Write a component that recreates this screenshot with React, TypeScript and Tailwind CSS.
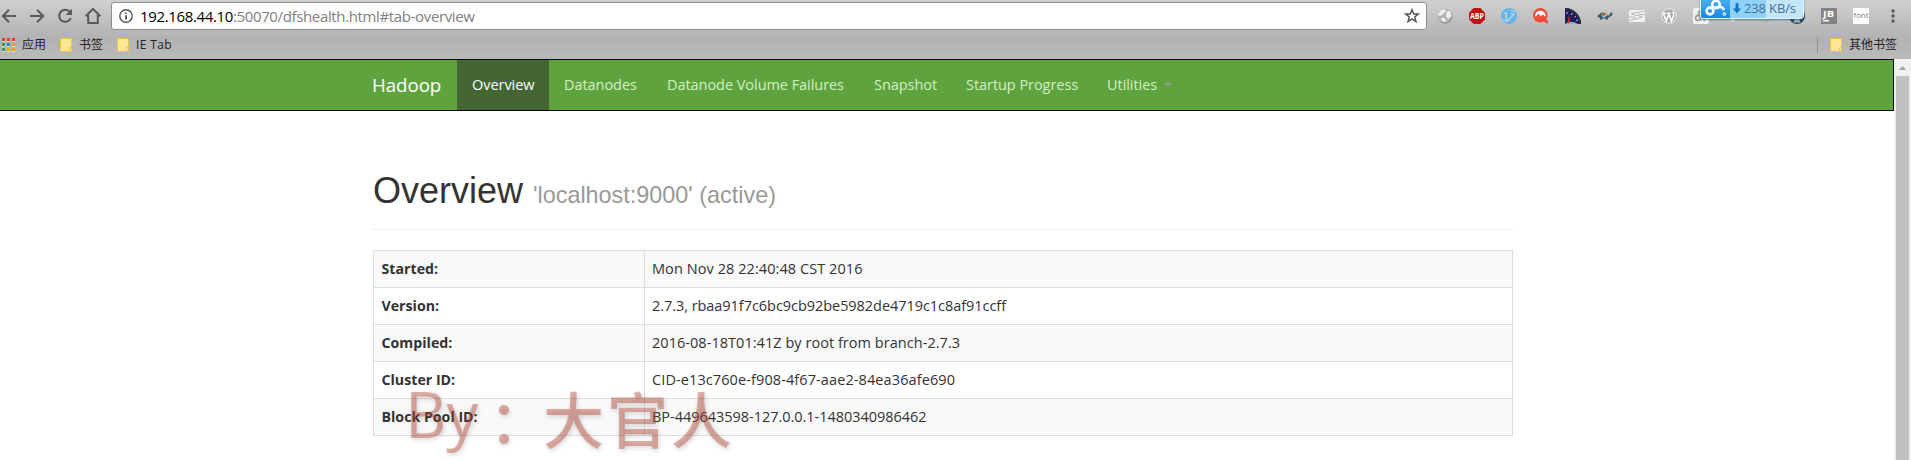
import React from "react";

function Slot({ children }: { children: React.ReactNode }) {
  return <div className="flex h-8 w-8 shrink-0 items-center justify-center">{children}</div>;
}

function Folder() {
  return (
    <svg width="12" height="14" viewBox="0 0 12 14" className="shrink-0">
      <path d="M.5.5h11v13H.5z" fill="#ffe694" stroke="#e8c44c" />
      <path d="M9.5 13V9.5h2" fill="none" stroke="#e8c44c" />
    </svg>
  );
}

function AppsGrid() {
  const colors = ["#f0392f", "#f0392f", "#f0392f", "#2da05a", "#2d87f0", "#f5a400", "#2da05a", "#f5a400", "#f5a400"];
  return (
    <svg width="13" height="14" viewBox="0 0 13 14" className="shrink-0">
      {colors.map((c, i) => (
        <g key={i}>
          <rect x={(i % 3) * 5} y={Math.floor(i / 3) * 5 + 1} width="3" height="3" fill="#ddd" />
          <rect x={(i % 3) * 5} y={Math.floor(i / 3) * 5} width="3" height="3" fill={c} />
        </g>
      ))}
    </svg>
  );
}

function NavButtons() {
  return (
    <svg width="111" height="32" viewBox="0 0 111 32" className="shrink-0" fill="none" stroke="#5a5a5a" strokeWidth="2">
      <path d="M16 16H3.5M9 9.8L2.8 16L9 22.2" />
      <path d="M30 16H42.5M37 9.8L43.2 16L37 22.2" />
      <path d="M70 12.2A6 6 0 1 0 70.8 18" />
      <path d="M72 8.7V15H65.7Z" fill="#5a5a5a" stroke="none" />
      <path d="M85.6 16.2L93 9L100.4 16.2M88.2 15V23H97.8V15" />
    </svg>
  );
}

function AddressBar() {
  return (
    <div className="flex h-7 w-[1316px] shrink-0 items-center rounded-[3px] border border-[#8c8c8c] bg-white pl-[7px] pr-[6px]">
      <svg width="14" height="14" viewBox="0 0 14 14" fill="none" stroke="#555" className="shrink-0">
        <circle cx="7" cy="7" r="6.2" strokeWidth="1.4" />
        <path d="M7 6.2V10.5M7 3.4V5.1" strokeWidth="1.8" />
      </svg>
      <div className="ml-[7px] grow whitespace-nowrap text-[15px] leading-7 tracking-[-0.36px] text-[#808080]">
        <span className="text-black">192.168.44.10</span>:50070/dfshealth.html#tab-overview
      </div>
      <svg width="16" height="16" viewBox="0 0 16 16" fill="none" stroke="#555" strokeWidth="1.5">
        <path d="M8 1.8L9.8 6H14.2L10.7 8.9L12 13.6L8 10.9L4 13.6L5.3 8.9L1.8 6H6.2Z" />
      </svg>
    </div>
  );
}

function Extensions() {
  return (
    <div className="flex h-8 grow">
      <Slot>
        <svg width="16" height="16" viewBox="0 0 16 16">
          <circle cx="8.2" cy="8.5" r="7.2" fill="#8b8b8b" />
          <circle cx="7.7" cy="7.7" r="7" fill="#b5b5b5" />
          <path d="M2 5L4 2L8 1L9 3L6 6L3 8L1 7ZM10 3L13 3L14.5 8L11 11L9 8ZM4 10L8 10L9 14L5 13Z" fill="#eee" />
        </svg>
      </Slot>
      <Slot>
        <svg width="16" height="16" viewBox="0 0 16 16">
          <path d="M4.7 0H11.3L16 4.7V11.3L11.3 16H4.7L0 11.3V4.7Z" fill="#c70d0d" />
          <text x="8" y="10.9" textAnchor="middle" textLength="14" lengthAdjust="spacingAndGlyphs" fontSize="8" fontWeight="700" fill="#fff">ABP</text>
        </svg>
      </Slot>
      <Slot>
        <svg width="16" height="16" viewBox="0 0 16 16">
          <circle cx="8" cy="8" r="8" fill="#64b5ec" />
          <path d="M2.5 4.5H6.5V10L10 6.5L9 5H14L13.5 7L6.8 14H4.3V6H2.5Z" fill="#b3d0e0" />
          <path d="M6.8 5V10.5L10.5 6.5" fill="none" stroke="#64b5ec" strokeWidth="1.2" />
          <path d="M9 2.5L14 3.5M1 11L4 13" stroke="#b9d5e5" />
        </svg>
      </Slot>
      <Slot>
        <svg width="16" height="16" viewBox="0 0 16 16">
          <path d="M11 11.5L14.8 14.6" stroke="#f04b38" strokeWidth="3" />
          <circle cx="7.3" cy="7.3" r="7.3" fill="#f04b38" />
          <path d="M2 7.5A5.4 5.4 0 0 1 12.7 7.5L11.5 8.5L9.8 6.3L7.8 8.5L5.5 5.5L2.5 9Z" fill="#fff" />
        </svg>
      </Slot>
      <Slot>
        <svg width="16" height="16" viewBox="0 0 16 16">
          <path d="M0 0C9 0 16 7 16 16H0Z" fill="#1d1c58" />
          <path d="M0 .8C8 .8 15.2 8 15.2 16" fill="none" stroke="#33303f" strokeWidth="1.6" />
          <path d="M0 16Q6 11.5 13 16Z" fill="#7fb0d9" />
          <path d="M2.5 15L4.3 6L5 15Z" fill="#e22c24" />
          <path d="M2 4V6M7 5L6.5 7M11 8L9.5 9.5M13 12L11 12.5" stroke="#ccd" />
        </svg>
      </Slot>
      <Slot>
        <svg width="16" height="16" viewBox="0 0 16 16">
          <path d="M.5 8Q6 1.5 11 7.5L12.5 7L13.3 4.5L15.8 5L15 7.5L11.5 9.5L11 11.5H9L8 10.5H5.5L4.5 11.8H3L3 10L.5 8.8Z" fill="#44576a" />
          <path d="M3.5 7.5Q4.5 5 6.7 4.8L7 7.5Z" fill="#4fae68" />
          <path d="M4.5 5.8Q7 4 9 5.5L7 7Z" fill="#e44b38" />
          <path d="M8.3 5.5Q10 6 10.2 8H8Z" fill="#f1c14b" />
          <path d="M5 7.5H9L8 9.6H6Z" fill="#8ccbf2" />
        </svg>
      </Slot>
      <Slot>
        <svg width="16" height="16" viewBox="0 0 16 16">
          <path d="M0 2H16V14H0Z" fill="#f2f2f2" />
          <path d="M16 3.3L3 5.2Q1.5 6.2 5 6.8L13 8.4Q14 9.6 0 12.2M0 8.8L7 9.3M9 6L16 6.8" fill="none" stroke="#b9b9b9" strokeWidth="1.1" />
        </svg>
      </Slot>
      <Slot>
        <svg width="16" height="16" viewBox="0 0 16 16">
          <circle cx="8" cy="8" r="7.2" fill="#aaa" stroke="#eee" strokeWidth="1" />
          <path d="M2.3 5.2L5.2 13L7.8 6L10.5 13L13 6.5M1.8 5.2H5M6 5.2H9.5M11.5 4L13 6.5" fill="none" stroke="#fff" strokeWidth="1.6" />
        </svg>
      </Slot>
      <Slot>
        <svg width="16" height="16" viewBox="0 0 16 16">
          <rect width="16" height="16" rx="2" fill="#f2f2f2" />
          <circle cx="5" cy="10" r="2.5" fill="none" stroke="#999" strokeWidth="1.6" />
          <circle cx="8" cy="5.5" r="2.5" fill="none" stroke="#999" strokeWidth="1.6" />
          <path d="M8 8L12 12.5" stroke="#999" strokeWidth="1.6" />
        </svg>
      </Slot>
      <Slot>
        <svg width="16" height="16" viewBox="0 0 16 16"><path d="M5 11H11L8 14Z" fill="#eee" /></svg>
      </Slot>
      <Slot>
        <svg width="16" height="16" viewBox="0 0 16 16"><circle cx="8" cy="9" r="5" fill="#bdbdbd" stroke="#a8a8a8" /></svg>
      </Slot>
      <Slot>
        <svg width="16" height="16" viewBox="0 0 16 16">
          <circle cx="8" cy="8" r="8" fill="#2a4a60" />
          <path d="M4.5 14.5L6 10H10L11.5 14.5Z" fill="#a9b6be" />
        </svg>
      </Slot>
      <Slot>
        <svg width="16" height="16" viewBox="0 0 16 16">
          <rect width="16" height="16" fill="#858585" />
          <text x="2" y="9" textLength="11" lengthAdjust="spacingAndGlyphs" fontSize="9.5" fontWeight="700" fill="#fff">JB</text>
          <path d="M2 12.7H8" stroke="#fff" strokeWidth="1.4" />
        </svg>
      </Slot>
      <Slot>
        <svg width="16" height="16" viewBox="0 0 16 16">
          <rect width="16" height="16" fill="#fff" />
          <text x=".5" y="10" textLength="15" lengthAdjust="spacingAndGlyphs" fontSize="7.5" fill="#777">font</text>
        </svg>
      </Slot>
      <Slot>
        <svg width="4" height="16" viewBox="0 0 4 16" fill="#5a5a5a">
          <circle cx="2" cy="3" r="1.7" /><circle cx="2" cy="8" r="1.7" /><circle cx="2" cy="13" r="1.7" />
        </svg>
      </Slot>
    </div>
  );
}

function SpeedWidget() {
  return (
    <div className="absolute left-[1700px] top-[-4px] flex h-[23px] w-[104px] overflow-hidden rounded-[3px] border border-[#eaf6fd] shadow-[0_1px_2px_rgba(0,70,130,0.6)]">
      <div className="flex w-[29px] shrink-0 items-center justify-center bg-linear-to-b from-[#4fb4f2] to-[#1688df]">
        <svg width="22" height="18" viewBox="0 0 22 18" fill="none" stroke="#fff" strokeWidth="2.6">
          <circle cx="5" cy="12" r="3.4" />
          <circle cx="11" cy="5.5" r="3.8" />
          <path d="M10 9Q17 6 19 11" />
          <circle cx="19.3" cy="15" r=".5" />
        </svg>
      </div>
      <div className="flex grow items-center bg-linear-to-r from-[#8fd1fa] from-50% to-[#c3e6fb] to-50% pl-[3px] pt-[1px] text-[13px] leading-none text-[#41729c]">
        <svg width="8" height="11" viewBox="0 0 8 11" className="mr-[3px] shrink-0">
          <path d="M2.6 0H5.4V5.5H8L4 10.5L0 5.5H2.6Z" fill="#0d73c4" />
        </svg>
        <span className="whitespace-nowrap tracking-[-0.15px]">238 KB/s</span>
      </div>
    </div>
  );
}

function BookmarksBar() {
  return (
    <div className="flex h-[25px] items-center pl-[2px] text-[12px] leading-[25px] text-[#222]">
      <AppsGrid />
      <span className="ml-[7px] w-[38px] shrink-0">应用</span>
      <Folder />
      <span className="ml-[7px] w-[38px] shrink-0">书签</span>
      <Folder />
      <span className="ml-[7px] grow tracking-[0.35px]">IE Tab</span>
      <div className="mr-3 h-4 w-px bg-[#909090]" />
      <Folder />
      <span className="ml-[7px] mr-[14px] w-12 whitespace-nowrap">其他书签</span>
    </div>
  );
}

function NavBar() {
  const item = "shrink-0 whitespace-nowrap pl-[15px] text-[#d2f0c4]";
  return (
    <nav className="flex h-[52px] border border-l-0 border-[#080808] bg-[#5fa33e] pl-[372px] text-[14.5px] leading-[50px] tracking-[-0.05px]">
      <span className="w-[85px] shrink-0 text-[18.7px] text-white">Hadoop</span>
      <span className="w-[92px] shrink-0 bg-[#446633] pl-[15px] text-white">Overview</span>
      <span className={item + " w-[103px]"}>Datanodes</span>
      <span className={item + " w-[207px]"}>Datanode Volume Failures</span>
      <span className={item + " w-[92px]"}>Snapshot</span>
      <span className={item + " w-[141px]"}>Startup Progress</span>
      <span className={item + " flex items-center"}>
        <span className="w-[57px]">Utilities</span>
        <svg width="8" height="4" viewBox="0 0 8 4"><path d="M0 0H8L4 4Z" fill="#999" /></svg>
      </span>
    </nav>
  );
}

const rows = [
  { label: "Started:", value: "Mon Nov 28 22:40:48 CST 2016", tracking: "tracking-[0.07px]" },
  { label: "Version:", value: "2.7.3, rbaa91f7c6bc9cb92be5982de4719c1c8af91ccff", tracking: "tracking-[-0.05px]" },
  { label: "Compiled:", value: "2016-08-18T01:41Z by root from branch-2.7.3", tracking: "tracking-[0.04px]" },
  { label: "Cluster ID:", value: "CID-e13c760e-f908-4f67-aae2-84ea36afe690", tracking: "tracking-[0.1px]" },
  { label: "Block Pool ID:", value: "BP-449643598-127.0.0.1-1480340986462", tracking: "tracking-[-0.03px]" },
];

function Watermark() {
  return (
    <div className="absolute left-[405px] top-[379px] flex h-20 items-start leading-[80px] text-[#b84434]/42 [text-shadow:1px_2px_5px_rgba(0,0,0,0.16)]">
      <span className="-mt-[5px] w-[84px] text-[64px]">By</span>
      <span className="-mt-px w-[54px] font-['Noto_Sans_CJK_SC',sans-serif] text-[60px] font-medium">：</span>
      <span className="-mt-px whitespace-nowrap font-['Noto_Sans_CJK_SC',sans-serif] text-[61px] font-medium tracking-[3px]">大官人</span>
    </div>
  );
}

export default function App() {
  return (
    <div className="relative flex h-[460px] w-[1911px] flex-col overflow-hidden bg-white font-['Open_Sans','Noto_Sans_CJK_SC',sans-serif]">
      <header className="h-[59px] shrink-0 bg-linear-to-b from-[#d0d0d0] via-[#b2b2b2] via-65% to-[#bababa]">
        <div className="flex h-8 items-center">
          <NavButtons />
          <AddressBar />
          <div className="w-[2px] shrink-0" />
          <Extensions />
        </div>
        <BookmarksBar />
      </header>
      <div className="flex grow">
        <div className="w-[1894px] shrink-0">
          <NavBar />
          <main className="ml-[373px] w-[1140px] pt-[60px]">
            <h1 className="h-[59px] border-b border-[#eee] font-['Liberation_Sans',sans-serif] text-[36px] leading-[40px] text-[#333]">
              Overview <small className="text-[23.4px] text-[#999]">'localhost:9000' (active)</small>
            </h1>
            <table className="mt-5 w-full table-fixed border-collapse border border-[#ddd] text-left text-[14.5px] leading-5 text-[#333]">
              <colgroup>
                <col className="w-[271px]" />
                <col />
              </colgroup>
              <tbody>
                {rows.map((row) => (
                  <tr key={row.label} className="h-[37px] odd:bg-[#f9f9f9]">
                    <th className="border border-[#ddd] py-2 pl-[7.5px] text-[14.2px] font-bold">{row.label}</th>
                    <td className={"border border-[#ddd] py-2 pl-[7px] " + row.tracking}>{row.value}</td>
                  </tr>
                ))}
              </tbody>
            </table>
          </main>
        </div>
        <div className="flex grow flex-col items-center bg-[#f1f1f1]">
          <div className="flex h-[17px] items-center">
            <svg width="7" height="4" viewBox="0 0 7 4"><path d="M0 4H7L3.5 0Z" fill="#a3a3a3" /></svg>
          </div>
          <div className="w-[13px] grow bg-[#c1c1c1]" />
        </div>
      </div>
      <SpeedWidget />
      <Watermark />
    </div>
  );
}
